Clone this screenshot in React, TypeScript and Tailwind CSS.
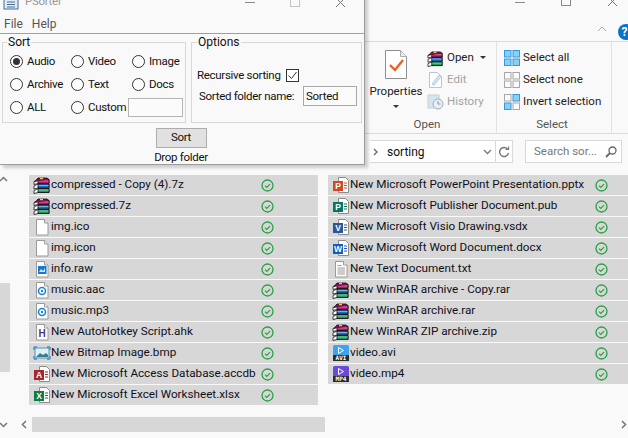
import type { ReactNode } from 'react';

const leftFiles = [
  { name: 'compressed - Copy (4).7z', icon: 'rar' },
  { name: 'compressed.7z', icon: 'rar' },
  { name: 'img.ico', icon: 'blank' },
  { name: 'img.icon', icon: 'blank' },
  { name: 'info.raw', icon: 'raw' },
  { name: 'music.aac', icon: 'audio' },
  { name: 'music.mp3', icon: 'audio' },
  { name: 'New AutoHotkey Script.ahk', icon: 'ahk' },
  { name: 'New Bitmap Image.bmp', icon: 'bmp' },
  { name: 'New Microsoft Access Database.accdb', icon: 'access' },
  { name: 'New Microsoft Excel Worksheet.xlsx', icon: 'excel' },
];

const rightFiles = [
  { name: 'New Microsoft PowerPoint Presentation.pptx', icon: 'ppt' },
  { name: 'New Microsoft Publisher Document.pub', icon: 'pub' },
  { name: 'New Microsoft Visio Drawing.vsdx', icon: 'visio' },
  { name: 'New Microsoft Word Document.docx', icon: 'word' },
  { name: 'New Text Document.txt', icon: 'txt' },
  { name: 'New WinRAR archive - Copy.rar', icon: 'rar' },
  { name: 'New WinRAR archive.rar', icon: 'rar' },
  { name: 'New WinRAR ZIP archive.zip', icon: 'rar' },
  { name: 'video.avi', icon: 'avi' },
  { name: 'video.mp4', icon: 'mp4' },
];

function RarIcon({ size = 18 }: { size?: number }) {
  const book = (y: number, color: string) => (
    <g key={y}>
      <path d={`M1 ${y + 2}l4-2h11v4H5l-4 1z`} fill="#fff" stroke="#111" strokeWidth="0.8" />
      <path d={`M5 ${y}h11v4H5z`} fill={color} stroke="#111" strokeWidth="0.8" />
      <path d={`M5.5 ${y + 1.5}h10`} stroke="#fff" strokeOpacity="0.45" />
    </g>
  );
  return (
    <svg width={size} height={size} viewBox="0 0 18 18">
      {book(12.5, '#1f9a5b')}
      {book(8, '#1b6fc4')}
      {book(3.5, '#b3126e')}
      <path d="M1.5 6l3.5-4h9l2 1.5" fill="#7a1050" stroke="#111" strokeWidth="0.8" />
      <path d="M7 2.5h3" stroke="#e8d44a" strokeWidth="1.4" />
    </svg>
  );
}

function Sheet({ children, lines }: { children?: ReactNode; lines?: boolean }) {
  return (
    <svg width="18" height="18" viewBox="0 0 18 18">
      <path d="M3.5 1.5h8l3.5 3.5v12h-11.500z" fill="#fff" stroke="#9a9a9a" />
      <path d="M11.500 1.500v3.500h3.500" fill="#eee" stroke="#9a9a9a" />
      {lines && <path d="M5.500 5.500h4M5.500 8h7.500M5.500 10h7.500M5.500 12h7.500M5.500 14h7.500" stroke="#9a9a9a" />}
      {children}
    </svg>
  );
}

function OfficeIcon({ color, letter }: { color: string; letter: string }) {
  return (
    <svg width="18" height="18" viewBox="0 0 18 18">
      <path d="M6.500 1.500h7l3 3v12h-10z" fill="#fff" stroke="#8c8c8c" />
      <path d="M12 7h3M12 9.500h3M12 12h3" stroke={color} strokeWidth="1.200" />
      <rect x="1" y="5" width="10" height="10" fill={color} />
      <text x="6" y="13" textAnchor="middle" fontSize="8.500" fontWeight="700" fill="#fff" fontFamily="'Liberation Sans', sans-serif">
        {letter}
      </text>
    </svg>
  );
}

function VideoIcon({ color, label }: { color: string; label: string }) {
  return (
    <svg width="18" height="18" viewBox="0 0 18 18">
      <rect x="1" y="1" width="16" height="16" rx="1.500" fill={color} />
      <path d="M6.500 3.500l5 3-5 3z" fill="none" stroke="#fff" />
      <rect x="1" y="11" width="16" height="6" fill="#2b2b2b" />
      <text x="9" y="16.300" textAnchor="middle" fontSize="6" fontWeight="700" fill="#fff" fontFamily="'DejaVu Sans Mono', monospace">
        {label}
      </text>
    </svg>
  );
}

function FileIcon({ kind }: { kind: string }) {
  switch (kind) {
    case 'rar':
      return <RarIcon />;
    case 'blank':
      return <Sheet />;
    case 'txt':
      return <Sheet lines />;
    case 'raw':
      return (
        <Sheet>
          <rect x="5" y="6" width="8.500" height="8" fill="#1479d0" />
          <path d="M6 12l2-3 2 2 2-3v4z" fill="#cfe8fb" />
        </Sheet>
      );
    case 'audio':
      return (
        <Sheet>
          <circle cx="9" cy="10" r="3.500" fill="none" stroke="#1c86d8" strokeWidth="1.600" />
          <circle cx="9" cy="10" r="1.200" fill="#1c86d8" />
        </Sheet>
      );
    case 'ahk':
      return (
        <Sheet>
          <text x="9" y="14" textAnchor="middle" fontSize="10" fontWeight="700" fill="#4a3a86" fontFamily="'Liberation Sans', sans-serif">
            H
          </text>
        </Sheet>
      );
    case 'bmp':
      return (
        <svg width="18" height="18" viewBox="0 0 18 18">
          <rect x="2" y="4" width="14" height="10" fill="#dff0f7" stroke="#5b8fb0" />
          <path d="M3 13l4-4 3 2 3-2 2 2v2z" fill="#3a7d8c" />
          <path d="M1 3h3M1 3v3M17 3h-3M17 3v3M1 15h3M1 15v-3M17 15h-3M17 15v-3" stroke="#3b8fd6" strokeWidth="1.400" />
        </svg>
      );
    case 'access':
      return <OfficeIcon color="#a4262c" letter="A" />;
    case 'excel':
      return <OfficeIcon color="#107c41" letter="X" />;
    case 'ppt':
      return <OfficeIcon color="#d24726" letter="P" />;
    case 'pub':
      return <OfficeIcon color="#077568" letter="P" />;
    case 'visio':
      return <OfficeIcon color="#2b579a" letter="V" />;
    case 'word':
      return <OfficeIcon color="#185abd" letter="W" />;
    case 'avi':
      return <VideoIcon color="#3aa4f2" label="AVI" />;
    default:
      return <VideoIcon color="#6a4ad6" label="MP4" />;
  }
}

function Check() {
  return (
    <svg width="13" height="13" viewBox="0 0 13 13" className="shrink-0">
      <circle cx="6.500" cy="6.500" r="5.500" fill="none" stroke="#27a243" strokeWidth="1.300" />
      <path d="M4 6.700l1.800 1.800 3.300-3.400" fill="none" stroke="#27a243" strokeWidth="1.200" />
    </svg>
  );
}

function FileRow({ name, icon, nameWidth }: { name: string; icon: string; nameWidth: string }) {
  return (
    <div className="flex h-[20px] items-center bg-[#d7d7d7] pl-[4px] text-[11.700px] text-[#101020]">
      <span className="flex w-[18px] shrink-0 items-center">
        <FileIcon kind={icon} />
      </span>
      <span className={`${nameWidth} whitespace-nowrap`}>{name}</span>
      <Check />
    </div>
  );
}

function Radio({ label, checked }: { label: string; checked?: boolean }) {
  return (
    <label className="flex items-center gap-[4px]">
      <span className="flex size-[13px] shrink-0 items-center justify-center rounded-full border border-[#333] bg-white">
        {checked && <span className="size-[7px] rounded-full bg-[#333]" />}
      </span>
      {label}
    </label>
  );
}

function RibbonAction({ icon, label, muted, caret }: { icon: ReactNode; label: string; muted?: boolean; caret?: boolean }) {
  return (
    <div className={`flex h-[22px] items-center gap-[3px] ${muted ? 'text-[#a3a3a3]' : 'text-[#222]'}`}>
      <span className="flex w-[17px] justify-center">{icon}</span>
      {label}
      {caret && <span className="ml-[3px] mt-[-2px] border-x-[3px] border-t-[3px] border-x-transparent border-t-[#333]" />}
    </div>
  );
}

function SelectIcon({ on }: { on: number[] }) {
  return (
    <svg width="16" height="16" viewBox="0 0 16 16">
      {[0, 1, 2, 3].map((i) => {
        const x = i % 2 ? 9 : 0.500;
        const y = i > 1 ? 9 : 0.500;
        const active = on.includes(i);
        return (
          <rect
            key={i}
            x={x}
            y={y}
            width="6.500"
            height="6.500"
            fill={active ? '#90cdf4' : 'none'}
            stroke={active ? '#2f9be0' : '#a8a8a8'}
          />
        );
      })}
    </svg>
  );
}

function SorterWindow() {
  return (
    <div className="absolute left-0 top-[-13px] w-[365px] border-b border-r border-[#9c9c9c] bg-[#f9f9f9] font-['Roboto',sans-serif] text-[11.500px] tracking-[-0.3px] text-[#111] shadow-[3px_3px_3px_rgba(0,0,0,0.18)]">
      <div className="flex h-[30px] items-center text-[#9a9a9a]">
        <svg width="16" height="16" viewBox="0 0 16 16" className="ml-[3px]">
          <rect x="1" y="5" width="14" height="10" fill="#dcebf7" stroke="#4d6f96" />
          <path d="M4 8h8M4 10.500h8M4 13h8" stroke="#4d6f96" />
          <path d="M8 1v5" stroke="#e0821e" strokeWidth="1.500" />
        </svg>
        <span className="ml-[6px] w-[38px]">PSorter</span>
        <span className="ml-[182px] h-px w-[10px] bg-[#8a8a8a]" />
        <span className="ml-[35px] size-[10px] border border-[#c4c4c4]" />
        <svg width="11" height="11" viewBox="0 0 11 11" className="ml-[35px]">
          <path d="M1 1l9 9M10 1l-9 9" stroke="#777" />
        </svg>
      </div>
      <div className="flex h-[17px] items-center gap-[9px] border-b border-[#a0a0a0] pl-[4px] pb-[2px] text-[12px] tracking-normal text-[#555]">
        <span>File</span>
        <span>Help</span>
      </div>
      <div className="flex gap-[5px] pl-[2px] pt-[1px]">
        <fieldset className="h-[88px] w-[184px] border border-[#d8d8d8] pl-[7px]">
          <legend className="-ml-[3px] px-[1px] text-[12px] leading-[14px] tracking-normal">Sort</legend>
          <div className="grid grid-cols-[61px_61px_1fr] grid-rows-[23px_23px_23px] items-center pt-[1px]">
            <Radio label="Audio" checked />
            <Radio label="Video" />
            <Radio label="Image" />
            <Radio label="Archive" />
            <Radio label="Text" />
            <Radio label="Docs" />
            <Radio label="ALL" />
            <div className="col-span-2 flex items-center">
              <span className="w-[57px]">
                <Radio label="Custom" />
              </span>
              <span className="h-[19px] w-[55px] border border-[#b5b5b5] bg-[#fbfbfb]" />
            </div>
          </div>
        </fieldset>
        <fieldset className="h-[88px] w-[171px] border border-[#d8d8d8] pl-[5px]">
          <legend className="px-[1px] text-[12px] leading-[14px] tracking-normal">Options</legend>
          <div className="mt-[18px] flex items-center gap-[5px]">
            Recursive sorting
            <span className="flex size-[13px] items-center justify-center border border-[#333] bg-white">
              <svg width="11" height="11" viewBox="0 0 11 11">
                <path d="M1.500 5.500l3 3 5-6.500" fill="none" stroke="#333" />
              </svg>
            </span>
          </div>
          <div className="mt-[2px] flex items-center pl-[2px]">
            <span className="w-[104px] whitespace-nowrap">Sorted folder name:</span>
            <span className="flex h-[20px] w-[54px] items-center border border-[#a8a8a8] bg-[#fbfbfb] pl-[2px]">Sorted</span>
          </div>
        </fieldset>
      </div>
      <div className="flex flex-col items-center pr-[2px]">
        <button className="mt-[5px] h-[20px] w-[51px] border border-[#adadad] bg-[#e1e1e1]">Sort</button>
        <span className="mt-[2px] leading-[14px]">Drop folder</span>
      </div>
    </div>
  );
}

function Ribbon() {
  return (
    <div className="font-['Roboto',sans-serif] text-[11.500px] text-[#222]">
      <div className="relative h-[42px] border-b border-[#dadbdc] pl-[515px]">
        <div className="flex h-[4px] items-end">
          <span className="mb-[1px] h-px w-[10px] bg-[#8a8a8a]" />
        </div>
        <span className="absolute left-[561px] top-[-4px] size-[10px] border border-[#888]" />
        <svg width="10" height="10" viewBox="0 0 10 10" className="absolute left-[608px] top-[-3px]">
          <path d="M0 0l9 9M9 0l-9 9" stroke="#777" />
        </svg>
        <svg width="10" height="6" viewBox="0 0 10 6" className="absolute left-[597px] top-[26px]">
          <path d="M1 5l4-4 4 4" fill="none" stroke="#aaa" />
        </svg>
        <span className="absolute left-[618px] top-[24px] flex size-[16px] items-center justify-center rounded-full bg-[#0a72c7] pr-[3px] text-[12px] font-bold text-white">
          ?
        </span>
      </div>
      <div className="flex h-[92px] border-b border-[#dadbdc] pl-[370px]">
        <div className="flex w-[127px] shrink-0 flex-col border-r border-[#e2e2e2]">
          <div className="flex flex-1 pt-[5px]">
            <div className="flex w-[52px] flex-col items-center">
              <svg width="22" height="29" viewBox="0 0 22 29" className="mt-[3px]">
                <path d="M.500.500h15l6 6v22h-21z" fill="#fff" stroke="#8f8f8f" />
                <path d="M15.500.500v6h6" fill="#eee" stroke="#aaa" />
                <path d="M5 15l5 5 8-10" fill="none" stroke="#e8622a" strokeWidth="2.400" />
              </svg>
              <span className="mt-[4px] leading-[16px]">Properties</span>
              <span className="mt-[6px] border-x-[3px] border-t-[3px] border-x-transparent border-t-[#333]" />
            </div>
            <div className="ml-[5px] flex flex-col">
              <RibbonAction icon={<RarIcon size={17} />} label="Open" caret />
              <RibbonAction
                muted
                label="Edit"
                icon={
                  <svg width="15" height="16" viewBox="0 0 15 16">
                    <path d="M1.500.500h8l4 4v11h-12z" fill="#fff" stroke="#b8c4d4" />
                    <path d="M4 12l7-9 2 1.500-7 9z" fill="#d5e4f3" stroke="#b8cbe0" />
                  </svg>
                }
              />
              <RibbonAction
                muted
                label="History"
                icon={
                  <svg width="17" height="16" viewBox="0 0 17 16">
                    <rect x="1" y="1" width="11" height="13" fill="#d5e4ef" stroke="#c4d0da" />
                    <circle cx="11" cy="10" r="5" fill="#e6eef4" stroke="#9fb1c1" />
                    <path d="M11 7v3h2.500" fill="none" stroke="#8a9cab" />
                  </svg>
                }
              />
            </div>
          </div>
          <span className="pb-[1px] pr-[12px] text-center leading-[16px] text-[#555]">Open</span>
        </div>
        <div className="flex w-[115px] shrink-0 flex-col border-r border-[#e2e2e2]">
          <div className="flex flex-1 flex-col pl-[6px] pt-[5px]">
            <RibbonAction icon={<SelectIcon on={[0, 1, 2, 3]} />} label="Select all" />
            <RibbonAction icon={<SelectIcon on={[]} />} label="Select none" />
            <RibbonAction icon={<SelectIcon on={[1, 2]} />} label="Invert selection" />
          </div>
          <span className="pb-[1px] pr-[4px] text-center leading-[16px] text-[#555]">Select</span>
        </div>
      </div>
      <div className="flex h-[40px] items-start pl-[370px] pt-[6px]">
        <div className="flex h-[23px] w-[143px] items-center border-y border-r border-[#d9d9d9] bg-white">
          <svg width="6" height="8" viewBox="0 0 6 8" className="ml-[3px]">
            <path d="M1 1l3 3-3 3" fill="none" stroke="#666" strokeWidth="1.300" />
          </svg>
          <span className="ml-[8px] w-[96px] text-[12px] text-[#111]">sorting</span>
          <svg width="9" height="6" viewBox="0 0 9 6">
            <path d="M1 1l3.500 3.500L8 1" fill="none" stroke="#777" strokeWidth="1.300" />
          </svg>
          <span className="ml-[3px] flex h-full flex-1 items-center justify-center border-l border-[#d9d9d9]">
            <svg width="12" height="12" viewBox="0 0 12 12">
              <path d="M9.500 3A4.500 4.500 0 1 0 10.500 7" fill="none" stroke="#777" strokeWidth="1.400" />
              <path d="M7.500 3.500h3v-3" fill="none" stroke="#777" strokeWidth="1.200" />
            </svg>
          </span>
        </div>
        <div className="ml-[12px] flex h-[23px] w-[97px] items-center border border-[#d9d9d9] bg-white pl-[8px] text-[#777]">
          <span className="w-[71px] whitespace-nowrap">Search sor...</span>
          <svg width="12" height="12" viewBox="0 0 12 12">
            <circle cx="7.500" cy="4.500" r="3.500" fill="none" stroke="#666" strokeWidth="1.300" />
            <path d="M5 7l-4 4" stroke="#666" strokeWidth="1.800" />
          </svg>
        </div>
      </div>
    </div>
  );
}

export default function App() {
  return (
    <div className="relative h-[438px] w-[628px] overflow-hidden bg-[#f9f9f9]">
      <Ribbon />
      <div className="flex font-['Roboto',sans-serif]">
        <div className="h-[231px] w-[29px] shrink-0">
          <svg width="8" height="6" viewBox="0 0 8 6" className="mt-[2px]">
            <path d="M0 5l3.500-3.500L7 5" fill="none" stroke="#777" strokeWidth="1.500" />
          </svg>
          <div className="mt-[101px] h-[89px] w-[10px] bg-[#d7d7d7]" />
        </div>
        <div className="flex w-[289px] shrink-0 flex-col gap-[1px] pt-[1px]">
          {leftFiles.map((file) => (
            <FileRow key={file.name} name={file.name} icon={file.icon} nameWidth="w-[210px]" />
          ))}
        </div>
        <div className="ml-[10px] flex flex-1 flex-col gap-[1px] pt-[1px]">
          {rightFiles.map((file) => (
            <FileRow key={file.name} name={file.name} icon={file.icon} nameWidth="w-[245px]" />
          ))}
        </div>
      </div>
      <div className="mt-[12px] flex h-[15px] items-center">
        <svg width="8" height="6" viewBox="0 0 8 6" className="shrink-0">
          <path d="M0 1l3.500 3.500L7 1" fill="none" stroke="#777" strokeWidth="1.500" />
        </svg>
        <svg width="6" height="9" viewBox="0 0 6 9" className="ml-[13px] shrink-0">
          <path d="M5 1L1.500 4.500 5 8" fill="none" stroke="#777" strokeWidth="1.500" />
        </svg>
        <div className="ml-[5px] h-[15px] w-[293px] bg-[#d7d7d7]" />
        <svg width="6" height="9" viewBox="0 0 6 9" className="ml-[296px] shrink-0">
          <path d="M1 1l3.500 3.500L1 8" fill="none" stroke="#777" strokeWidth="1.500" />
        </svg>
      </div>
      <SorterWindow />
    </div>
  );
}
